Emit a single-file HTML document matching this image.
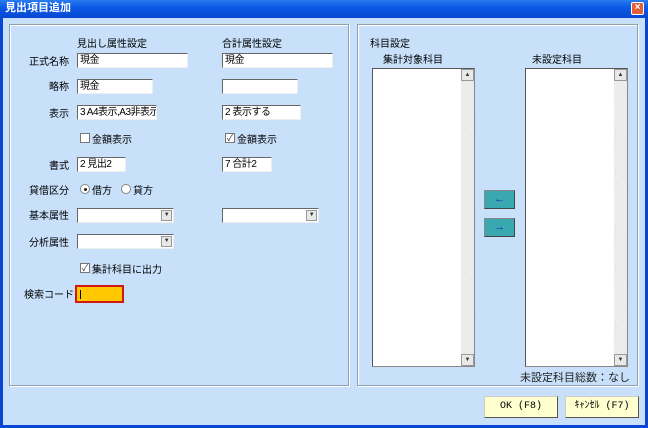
<!DOCTYPE html>
<html><head><meta charset="utf-8"><style>
*{margin:0;padding:0;box-sizing:border-box}
body{width:648px;height:428px;overflow:hidden;background:#0a46d6;font-family:"Liberation Sans","Noto Sans CJK JP",sans-serif;font-size:10px;line-height:18px;color:#000;position:relative}
.a{position:absolute}
#title{left:0;top:0;width:648px;height:18px;background:linear-gradient(#2a7cf0,#0a5ae6 40%,#0848d2);color:#fff;font-weight:bold;font-size:11px;line-height:17px;padding-left:5px}
#close{left:631px;top:2px;width:13px;height:13px;background:#e0603a;border:1px solid #fff;border-radius:2px;color:#fff;font-size:10px;line-height:10px;text-align:center;font-weight:bold}
#client{left:3px;top:18px;width:642px;height:407px;background:#c8e0fa}
.panel{border:1px solid #8ea0b0;box-shadow:inset 1px 1px 0 #fff,1px 1px 0 #fff}
.in{background:#fff;border:1px solid #888;border-top-color:#666;border-left-color:#666;border-right-color:#eee;border-bottom-color:#eee;height:15px;line-height:14px;padding-left:2px;font-size:10px;letter-spacing:-0.5px;white-space:nowrap;overflow:hidden}
.lbl{text-align:right;width:60px}
.cb{width:10px;height:10px;background:#fff;border:1px solid #777;font-size:9px;line-height:8px;text-align:center;color:#333}
.rb{width:10px;height:10px;background:#fff;border:1px solid #888;border-radius:50%}
.dd{position:absolute;right:1px;top:1px;width:11px;height:11px;background:#e8e8e8;border:1px solid #999;font-size:6px;line-height:9px;text-align:center;color:#333}
.list{background:#fff;border:1px solid #888;border-top-color:#555;border-left-color:#555}
.sb{position:absolute;right:0;top:0;width:13px;height:100%;background:repeating-linear-gradient(45deg,#e4e4e4 0 1px,#f4f4f4 1px 2px)}
.sbb{position:absolute;left:0;width:13px;height:12px;background:#e8e8e8;border:1px solid #999;font-size:6px;line-height:10px;text-align:center;color:#333}
.tb{background:#3aa8b0;border:1px solid #888;border-right-color:#444;border-bottom-color:#444;color:#1030c0;text-align:center;line-height:16px;font-size:11px}
.btn{background:#ffffd0;border:1px solid #ccc;border-right-color:#555;border-bottom-color:#555;text-align:center;line-height:20px;font-size:10px;font-family:"Liberation Mono","Noto Sans CJK JP",monospace}
</style></head><body>
<div id="title" class="a">見出項目追加</div>
<div id="close" class="a">×</div>
<div id="client" class="a"></div>

<div class="a panel" style="left:9px;top:24px;width:340px;height:362px"></div>
<div class="a panel" style="left:357px;top:24px;width:281px;height:362px"></div>

<div class="a" style="left:77px;top:36px">見出し属性設定</div>
<div class="a" style="left:222px;top:36px">合計属性設定</div>

<div class="a lbl" style="left:9px;top:54px">正式名称</div>
<div class="a in" style="left:77px;top:53px;width:111px">現金</div>
<div class="a in" style="left:222px;top:53px;width:111px">現金</div>

<div class="a lbl" style="left:9px;top:79px">略称</div>
<div class="a in" style="left:77px;top:79px;width:76px">現金</div>
<div class="a in" style="left:222px;top:79px;width:76px"></div>

<div class="a lbl" style="left:9px;top:106px">表示</div>
<div class="a in" style="left:77px;top:105px;width:80px">3 A4表示,A3非表示</div>
<div class="a in" style="left:222px;top:105px;width:79px">2 表示する</div>

<div class="a cb" style="left:80px;top:133px"></div>
<div class="a" style="left:92px;top:132px">金額表示</div>
<div class="a cb" style="left:225px;top:133px">✓</div>
<div class="a" style="left:237px;top:132px">金額表示</div>

<div class="a lbl" style="left:9px;top:158px">書式</div>
<div class="a in" style="left:77px;top:157px;width:49px">2 見出2</div>
<div class="a in" style="left:222px;top:157px;width:50px">7 合計2</div>

<div class="a lbl" style="left:9px;top:183px">貸借区分</div>
<div class="a rb" style="left:80px;top:184px"><div class="a" style="left:3px;top:3px;width:3px;height:3px;background:#222;border-radius:50%"></div></div>
<div class="a" style="left:92px;top:183px">借方</div>
<div class="a rb" style="left:121px;top:184px"></div>
<div class="a" style="left:133px;top:183px">貸方</div>

<div class="a lbl" style="left:9px;top:208px">基本属性</div>
<div class="a in" style="left:77px;top:208px;width:97px"><div class="dd">▼</div></div>
<div class="a in" style="left:222px;top:208px;width:97px"><div class="dd">▼</div></div>

<div class="a lbl" style="left:9px;top:235px">分析属性</div>
<div class="a in" style="left:77px;top:234px;width:97px"><div class="dd">▼</div></div>

<div class="a cb" style="left:80px;top:263px">✓</div>
<div class="a" style="left:92px;top:262px">集計科目に出力</div>

<div class="a" style="left:24px;top:287px">検索コード</div>
<div class="a" style="left:75px;top:285px;width:49px;height:18px;border:2px solid #d01818;background:#ffc800"><div class="a" style="left:3px;top:3px;width:1px;height:9px;background:#000"></div></div>

<div class="a" style="left:370px;top:36px">科目設定</div>
<div class="a" style="left:383px;top:52px">集計対象科目</div>
<div class="a" style="left:532px;top:52px">未設定科目</div>

<div class="a list" style="left:372px;top:68px;width:103px;height:299px"><div class="sb"><div class="sbb" style="top:0">▲</div><div class="sbb" style="bottom:0">▼</div></div></div>
<div class="a list" style="left:525px;top:68px;width:103px;height:299px"><div class="sb"><div class="sbb" style="top:0">▲</div><div class="sbb" style="bottom:0">▼</div></div></div>

<div class="a tb" style="left:484px;top:190px;width:31px;height:19px">←</div>
<div class="a tb" style="left:484px;top:218px;width:31px;height:19px">→</div>

<div class="a" style="left:510px;top:369px;width:120px;text-align:right;font-size:11px;color:#222">未設定科目総数：なし</div>

<div class="a btn" style="left:484px;top:396px;width:74px;height:22px">OK (F8)</div>
<div class="a btn" style="left:565px;top:396px;width:74px;height:22px">ｷｬﾝｾﾙ (F7)</div>
</body></html>
